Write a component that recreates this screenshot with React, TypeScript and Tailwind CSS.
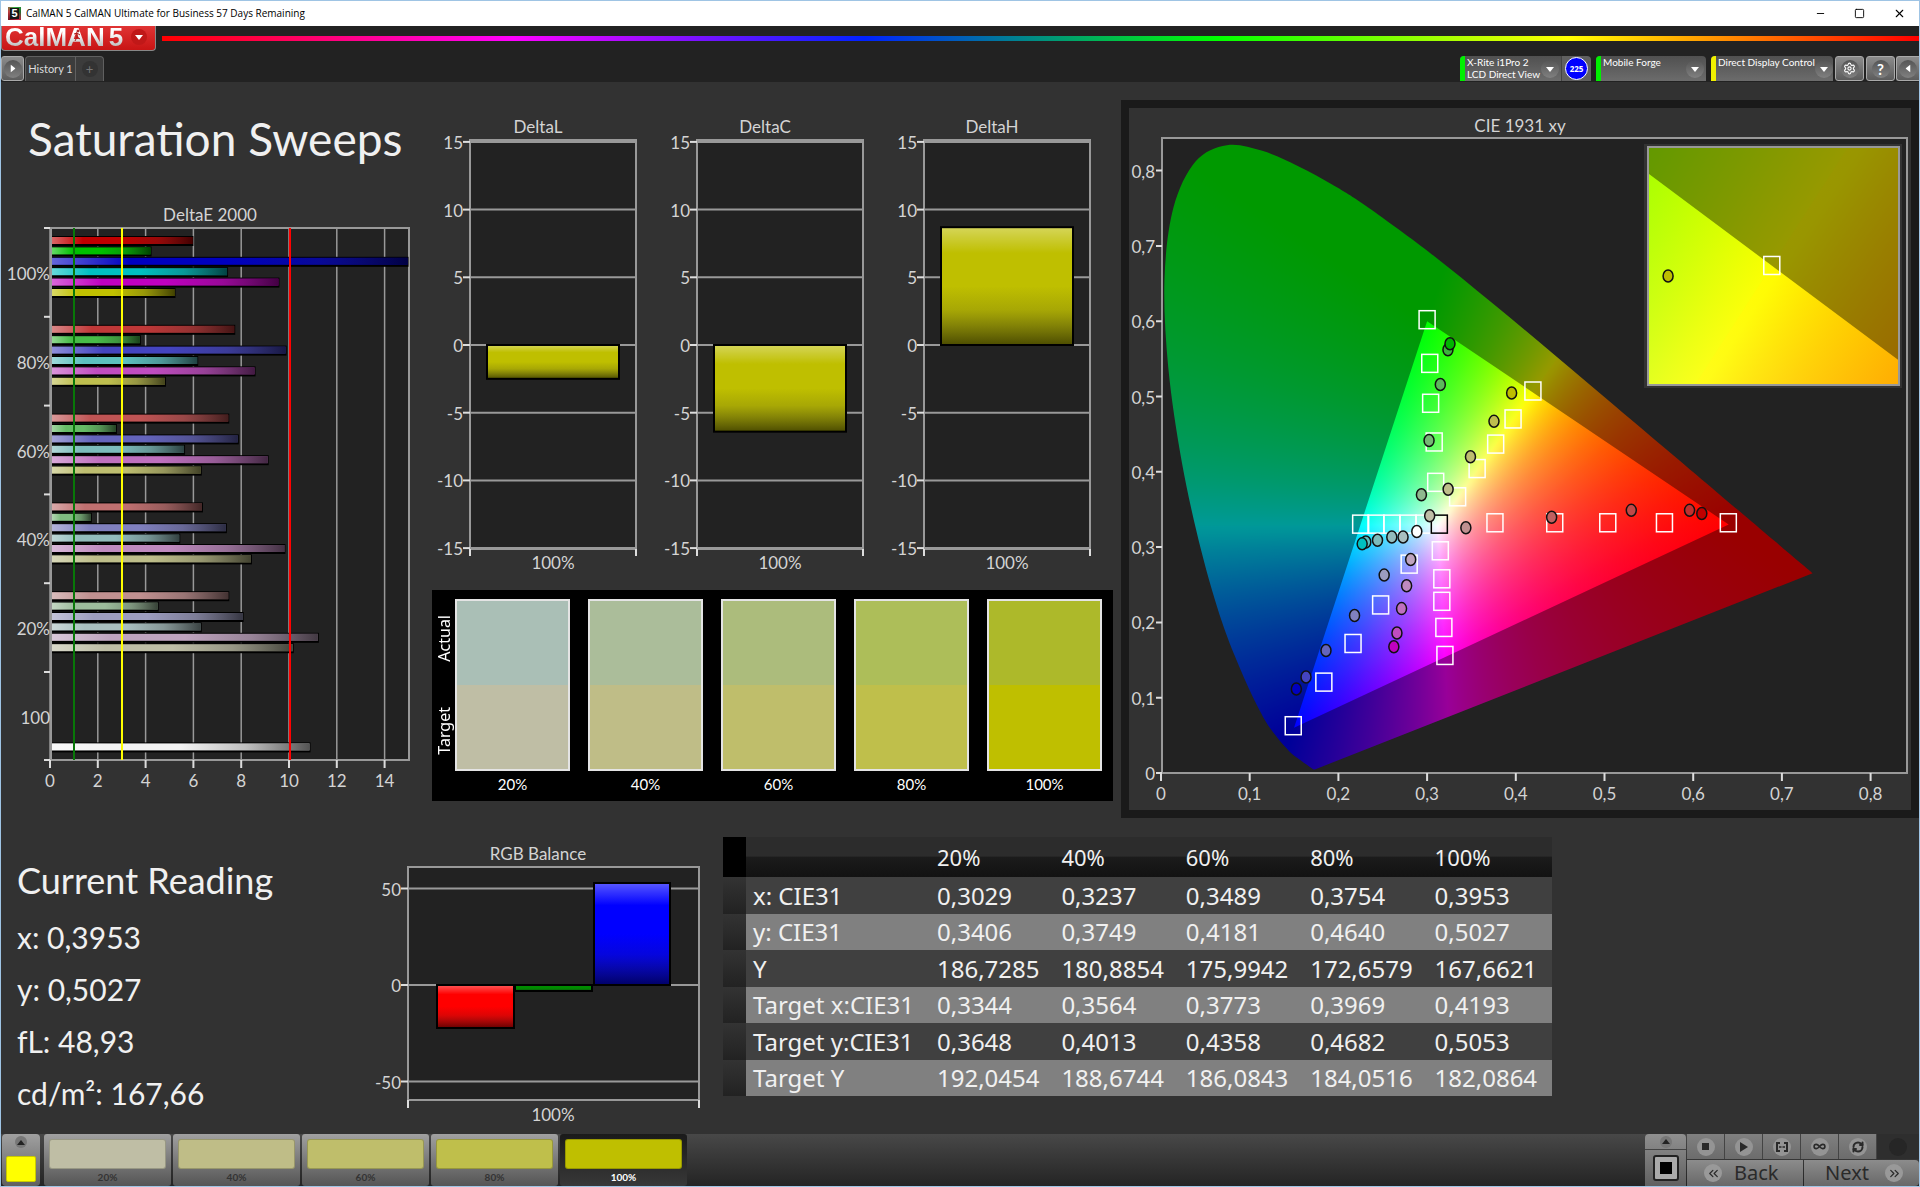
import type { CSSProperties, ReactNode } from "react";
import { Minus, Square, X, Settings, Infinity as InfinityIcon, RefreshCw, ChevronsLeft, ChevronsRight } from "lucide-react";
import clsx from "clsx";

type Point = [number, number];

interface Scale {
  ox: number;
  oy: number;
  kx: number;
  ky: number;
}

// ── Chart data ──

const LEVELS = ["20%", "40%", "60%", "80%", "100%"];

const DELTA_E = [
  {
    label: "100%",
    bars: [["#c00000", 6], ["#00c000", 4.25], ["#0000c0", 15], ["#00c0c0", 7.45], ["#c000c0", 9.6], ["#c0c000", 5.25]],
  },
  {
    label: "80%",
    bars: [["#c03838", 7.75], ["#48bc48", 3.8], ["#4444c0", 9.9], ["#5cc0c0", 6.2], ["#c04cc0", 8.6], ["#bebe4e", 4.85]],
  },
  {
    label: "60%",
    bars: [["#c05454", 7.5], ["#66bc66", 2.8], ["#6464bc", 7.9], ["#7cbcbc", 5.65], ["#bf70bf", 9.15], ["#bebe70", 6.35]],
  },
  {
    label: "40%",
    bars: [["#c07070", 6.4], ["#80bc80", 1.75], ["#8080bf", 7.4], ["#92bcbc", 5.45], ["#bf8abf", 9.85], ["#bebe8a", 8.45]],
  },
  {
    label: "20%",
    bars: [["#c09090", 7.5], ["#9cbc9c", 4.55], ["#9c9cbf", 8.1], ["#a8bfbf", 6.35], ["#bfa4bf", 11.25], ["#bebea6", 10.2]],
  },
  { label: "100", bars: [["#f4f4f4", 10.9]] },
] as { label: string; bars: [string, number][] }[];

const SWATCHES = [
  { actual: "#aabfb6", target: "#bfbea5" },
  { actual: "#abbd9a", target: "#bfbd87" },
  { actual: "#acbc7c", target: "#bfbe6b" },
  { actual: "#adbe59", target: "#bfbf4b" },
  { actual: "#adb92a", target: "#bfbf00" },
];

const READINGS = [
  ["x: CIE31", "0,3029", "0,3237", "0,3489", "0,3754", "0,3953"],
  ["y: CIE31", "0,3406", "0,3749", "0,4181", "0,4640", "0,5027"],
  ["Y", "186,7285", "180,8854", "175,9942", "172,6579", "167,6621"],
  ["Target x:CIE31", "0,3344", "0,3564", "0,3773", "0,3969", "0,4193"],
  ["Target y:CIE31", "0,3648", "0,4013", "0,4358", "0,4682", "0,5053"],
  ["Target Y", "192,0454", "188,6744", "186,0843", "184,0516", "182,0864"],
];

const LOCUS: Point[] = [
  [0.1741, 0.005], [0.1714, 0.0051], [0.1644, 0.0109], [0.1566, 0.0177], [0.144, 0.0297], [0.1241, 0.0578],
  [0.1096, 0.0868], [0.0913, 0.1327], [0.0687, 0.2007], [0.0454, 0.295], [0.0235, 0.4127], [0.0082, 0.5384],
  [0.0039, 0.6548], [0.0139, 0.7502], [0.0389, 0.812], [0.0743, 0.8338], [0.1142, 0.8262], [0.1547, 0.8059],
  [0.1929, 0.7816], [0.2296, 0.7543], [0.3016, 0.6923], [0.3731, 0.6245], [0.4441, 0.5547], [0.5125, 0.4866],
  [0.5752, 0.4242], [0.627, 0.3725], [0.6658, 0.334], [0.6915, 0.3083], [0.719, 0.2809], [0.7347, 0.2653],
];

const TARGETS: Point[] = [
  [0.3, 0.602], [0.303, 0.544], [0.304, 0.491], [0.308, 0.4396], [0.3097, 0.386],
  [0.3344, 0.3668], [0.3564, 0.4043], [0.3773, 0.4368], [0.3969, 0.4702], [0.4193, 0.5073],
  [0.3765, 0.3323], [0.4439, 0.3323], [0.5037, 0.3323], [0.5676, 0.3323], [0.6396, 0.3323],
  [0.2251, 0.3305], [0.2424, 0.3305], [0.2602, 0.3305], [0.2786, 0.3305], [0.2965, 0.3305],
  [0.3149, 0.2951], [0.3166, 0.2579], [0.3166, 0.228], [0.3189, 0.1933], [0.3201, 0.1561],
  [0.2798, 0.2774], [0.2476, 0.2232], [0.2165, 0.172], [0.1836, 0.1207], [0.1491, 0.0628],
];

const MEASURED: [number, number, string][] = [
  [0.2936, 0.3695, "#8fb88f"], [0.3022, 0.4415, "#74b874"], [0.3149, 0.5159, "#5cb85c"], [0.3235, 0.5622, "#3cb43c"], [0.3258, 0.5701, "#00b400"],
  [0.3437, 0.3256, "#c09090"], [0.4404, 0.3396, "#c06060"], [0.5302, 0.3488, "#c04848"], [0.5959, 0.3488, "#c03030"], [0.6097, 0.3445, "#c00000"],
  [0.3029, 0.3416, "#bebea6"], [0.3237, 0.3769, "#bebe8a"], [0.3489, 0.4201, "#bebe70"], [0.3754, 0.467, "#bebe4e"], [0.3953, 0.5047, "#bebe00"],
  [0.2884, 0.3207, "#ffffff"],
  [0.2729, 0.3134, "#a8bfbf"], [0.2602, 0.3134, "#92bcbc"], [0.2441, 0.3091, "#7cbcbc"], [0.2309, 0.3067, "#5cc0c0"], [0.2268, 0.3043, "#00c0c0"],
  [0.2516, 0.2628, "#9c9cbf"], [0.2182, 0.2091, "#8080bf"], [0.186, 0.1628, "#6464bc"], [0.1635, 0.1274, "#4444c0"], [0.1526, 0.1116, "#0000c0"],
  [0.2815, 0.2835, "#bfa4bf"], [0.2769, 0.2488, "#bf8abf"], [0.2712, 0.2183, "#bf70bf"], [0.266, 0.186, "#c04cc0"], [0.2625, 0.1677, "#c000c0"],
];

// ── Colour field ──

const RED: Point = [0.64, 0.33];
const GREEN: Point = [0.3, 0.6];
const BLUE: Point = [0.15, 0.06];
const WHITE: Point = [0.3127, 0.329];
const VERTICES = [RED, GREEN, BLUE];

function toPx([x, y]: Point, s: Scale): Point {
  return [s.ox + x * s.kx, s.oy - y * s.ky];
}

function linearRgb([x, y]: Point) {
  const z = 1 - x - y;
  return [
    3.2406 * x - 1.5372 * y - 0.4986 * z,
    -0.9689 * x + 1.8758 * y + 0.0415 * z,
    0.0557 * x - 0.204 * y + 1.057 * z,
  ];
}

// The ratio of two channels is constant along any ray from the third primary,
// so one conic gradient per minor channel gives the whole field.
function conic(dominant: number, minor: number, s: Scale) {
  const vertex = VERTICES[3 - dominant - minor];
  const [cx, cy] = toPx(vertex, s);
  const stops: string[] = [];
  for (let deg = 0; deg <= 360; deg += 1) {
    const a = (deg * Math.PI) / 180;
    const rgb = linearRgb([vertex[0] + (Math.sin(a) * 20) / s.kx, vertex[1] + (Math.cos(a) * 20) / s.ky]);
    const ratio = rgb[dominant] > 0 ? rgb[minor] / rgb[dominant] : 1;
    const v = Math.round(255 * Math.min(1, Math.max(0, ratio)));
    const c = [255, 255, 255];
    c[minor] = v;
    stops.push(`rgb(${c.join(",")}) ${deg}deg`);
  }
  return `conic-gradient(from 0deg at ${cx}px ${cy}px, ${stops.join(",")})`;
}

function fieldStyle(dominant: number, s: Scale): CSSProperties {
  const minors = [0, 1, 2].filter((c) => c !== dominant);
  return {
    backgroundImage: minors.map((m) => conic(dominant, m, s)).join(","),
    backgroundBlendMode: "multiply",
  };
}

function path(points: Point[]) {
  return `M${points.map((p) => p.map((n) => n.toFixed(2)).join(",")).join("L")}Z`;
}

function smoothPath(pts: Point[]) {
  let d = `M${pts[0].join(",")}`;
  for (let i = 0; i < pts.length - 1; i++) {
    const p0 = pts[Math.max(0, i - 1)];
    const p1 = pts[i];
    const p2 = pts[i + 1];
    const p3 = pts[Math.min(pts.length - 1, i + 2)];
    d += `C${p1[0] + (p2[0] - p0[0]) / 6},${p1[1] + (p2[1] - p0[1]) / 6} ${p2[0] - (p3[0] - p1[0]) / 6},${p2[1] - (p3[1] - p1[1]) / 6} ${p2.join(",")}`;
  }
  return `${d}Z`;
}

interface ColorFieldProps {
  id: string;
  scale: Scale;
  width: number;
  height: number;
}

function ColorField({ id, scale, width, height }: ColorFieldProps) {
  // rays leave white opposite each primary
  const ray = (v: Point): Point => [(WHITE[0] - v[0]) * 8, (WHITE[1] - v[1]) * 8];
  const at = (...rays: Point[]): Point =>
    toPx([WHITE[0] + rays.reduce((t, r) => t + r[0], 0), WHITE[1] + rays.reduce((t, r) => t + r[1], 0)], scale);
  const cyan = ray(RED);
  const magenta = ray(GREEN);
  const yellow = ray(BLUE);
  const triangle = path(VERTICES.map((v) => toPx(v, scale)));

  return (
    <>
      {/* the green wedge runs on under the blue one so that no seam shows */}
      <clipPath id={`${id}-green`}>
        <path d={path([at(), at(yellow), at(yellow, cyan), at(cyan), at(cyan, magenta)])} />
      </clipPath>
      <clipPath id={`${id}-blue`}>
        <path d={path([at(), at(cyan), at(cyan, magenta), at(magenta)])} />
      </clipPath>
      {[undefined, `url(#${id}-green)`, `url(#${id}-blue)`].map((clip, i) => (
        <g key={i} clipPath={clip}>
          <foreignObject width={width} height={height}>
            <div className="h-full w-full" style={fieldStyle(i, scale)} />
          </foreignObject>
        </g>
      ))}
      <path d={`M0,0H${width}V${height}H0Z${triangle}`} fillRule="evenodd" fill="#000" opacity={0.4} />
    </>
  );
}

function Target({ at, dark = false }: { at: Point; dark?: boolean }) {
  return <rect x={at[0] - 8} y={at[1] - 9} width={16} height={18} fill="none" stroke={dark ? "#000" : "#fff"} strokeWidth={1.5} />;
}

function Dot({ at, color }: { at: Point; color: string }) {
  return <ellipse cx={at[0]} cy={at[1]} rx={5} ry={6} fill={color} stroke="#111" strokeWidth={1.5} />;
}

const CIE: Scale = { ox: 32, oy: 665, kx: 887, ky: 753 };
const INSET: Scale = { ox: -1688, oy: 2170, kx: 4321, ky: 4060 };

function CieChart() {
  return (
    <svg viewBox="0 0 782 702" className="block w-full bg-[#323232] font-['Lato',sans-serif] text-[17px]" role="img" aria-label="CIE 1931 xy">
      <text x={391} y={24} textAnchor="middle" fill="#d4d4d4">CIE 1931 xy</text>
      <rect x={33} y={30} width={745} height={635} fill="#222" stroke="#999" strokeWidth={2} />
      <mask id="locus" maskUnits="userSpaceOnUse" x={0} y={0} width={782} height={702}>
        <path d={smoothPath(LOCUS.map((p) => toPx(p, CIE)))} fill="#fff" />
      </mask>
      <g mask="url(#locus)">
        <ColorField id="cie" scale={CIE} width={782} height={702} />
      </g>
      {[0, 1, 2, 3, 4, 5, 6, 7, 8].map((n) => {
        const [x] = toPx([n / 10, 0], CIE);
        const [, y] = toPx([0, n / 10], CIE);
        const label = n ? `0,${n}` : "0";
        return (
          <g key={n} fill="#d4d4d4">
            <path d={`M${x},665v8M33,${y}h-6`} stroke="#ddd" strokeWidth={2} />
            <text x={x} y={692} textAnchor="middle">{label}</text>
            <text x={26} y={y + 7} textAnchor="end">{label}</text>
          </g>
        );
      })}
      {TARGETS.map((t, i) => (
        <Target key={i} at={toPx(t, CIE)} />
      ))}
      <Target at={toPx([0.3138, 0.3305], CIE)} dark />
      {MEASURED.map(([x, y, color], i) => (
        <Dot key={i} at={toPx([x, y], CIE)} color={color} />
      ))}
      <rect x={515} y={36} width={258} height={244} fill="#333" />
      <svg x={519} y={39} width={251} height={238}>
        <ColorField id="inset" scale={INSET} width={251} height={238} />
        <Target at={toPx([0.4193, 0.5053], INSET)} />
        <Dot at={toPx([0.3953, 0.5027], INSET)} color="#bebe00" />
      </svg>
      <rect x={519} y={39} width={251} height={238} fill="none" stroke="#999" strokeWidth={2} />
    </svg>
  );
}

// ── Bar charts ──

function DeltaEChart() {
  const px = (v: number) => 50 + v * 23.9;
  return (
    <svg viewBox="1 199 430 600" className="block w-full font-['Lato',sans-serif] text-[17px]" role="img" aria-label="DeltaE 2000">
      <defs>
        <linearGradient id="sheen-x">
          <stop offset="0" stopColor="#fff" stopOpacity={0.4} />
          <stop offset="0.22" stopColor="#fff" stopOpacity={0} />
          <stop offset="0.5" stopColor="#222" stopOpacity={0} />
          <stop offset="0.75" stopColor="#222" stopOpacity={0.25} />
          <stop offset="1" stopColor="#000" stopOpacity={0.65} />
        </linearGradient>
      </defs>
      <text x={210} y={221} textAnchor="middle" fill="#d4d4d4">DeltaE 2000</text>
      <rect x={51} y={228} width={358} height={532} fill="#222" stroke="#999" strokeWidth={2} />
      {[0, 2, 4, 6, 8, 10, 12, 14].map((v) => (
        <g key={v}>
          <path d={`M${px(v)},228V760`} stroke="#999" strokeWidth={1.5} />
          <path d={`M${px(v)},760v8`} stroke="#ddd" strokeWidth={2} />
          <text x={px(v)} y={787} textAnchor="middle" fill="#d4d4d4">{v}</text>
        </g>
      ))}
      {DELTA_E.map(({ label, bars }, i) => {
        const top = 228 + i * 88.8;
        return (
          <g key={label}>
            <path d={`M50,${top}h-6`} stroke="#ddd" strokeWidth={2} />
            <text x={50} y={top + 52} textAnchor="end" fill="#d4d4d4">{label}</text>
            {bars.map(([color, value], j) => {
              const y = top + 8 + (bars.length === 1 ? 6 : j) * 10.4;
              return (
                <g key={color}>
                  <rect x={52} y={y} width={px(value) - 52} height={10} fill="#000" />
                  <rect x={52} y={y + 1} width={px(value) - 53} height={7} fill={color} />
                  <rect x={52} y={y + 1} width={px(value) - 53} height={7} fill="url(#sheen-x)" />
                </g>
              );
            })}
          </g>
        );
      })}
      <path d="M50,760h-6" stroke="#ddd" strokeWidth={2} />
      <path d="M74,228V760" stroke="#087808" strokeWidth={2} />
      <path d="M122,228V760" stroke="#ffff00" strokeWidth={2} />
      <path d="M290,228V760" stroke="#ff0000" strokeWidth={2} />
    </svg>
  );
}

interface GlossBarProps {
  x: number;
  y: number;
  width: number;
  height: number;
  color: string;
}

function GlossBar({ color, ...box }: GlossBarProps) {
  return (
    <>
      <rect {...box} fill={color} />
      <rect {...box} fill="url(#sheen-y)" stroke="#000" strokeWidth={2} />
    </>
  );
}

function SheenY() {
  return (
    <linearGradient id="sheen-y" x2="0" y2="1">
      <stop offset="0" stopColor="#fff" stopOpacity={0.35} />
      <stop offset="0.22" stopColor="#fff" stopOpacity={0} />
      <stop offset="0.5" stopColor="#222" stopOpacity={0} />
      <stop offset="0.7" stopColor="#222" stopOpacity={0.15} />
      <stop offset="1" stopColor="#000" stopOpacity={0.6} />
    </linearGradient>
  );
}

function DeltaChart({ title, value }: { title: string; value: number }) {
  const py = (v: number) => 245 - v * 13.54;
  return (
    <svg viewBox="2 0 227 480" className="block w-full min-w-0 flex-1 font-['Lato',sans-serif] text-[17px]" role="img" aria-label={title}>
      <defs>
        <SheenY />
      </defs>
      <text x={108} y={33} textAnchor="middle" fill="#d4d4d4">{title}</text>
      <rect x={40} y={40} width={166} height={409} fill="#222" stroke="#999" strokeWidth={2} />
      {[15, 10, 5, 0, -5, -10, -15].map((v) => (
        <g key={v}>
          <path d={`M40,${py(v)}h166`} stroke="#999" strokeWidth={2} />
          <path d={`M40,${py(v)}h-7`} stroke="#ddd" strokeWidth={2} />
          <text x={33} y={py(v) + 7} textAnchor="end" fill="#d4d4d4">{v}</text>
        </g>
      ))}
      <path d="M40,449v7M206,449v7" stroke="#ddd" strokeWidth={2} />
      <GlossBar x={57} y={Math.min(py(0), py(value))} width={132} height={Math.abs(value) * 13.54} color="#bfbf00" />
      <text x={123} y={469} textAnchor="middle" fill="#d4d4d4">100%</text>
    </svg>
  );
}

function RgbBalance() {
  return (
    <svg viewBox="361 840 350 290" className="block w-full font-['Lato',sans-serif] text-[17px]" role="img" aria-label="RGB Balance">
      <defs>
        <SheenY />
      </defs>
      <text x={538} y={860} textAnchor="middle" fill="#d4d4d4">RGB Balance</text>
      <rect x={408} y={867} width={291} height={233} fill="#222" stroke="#999" strokeWidth={2} />
      {[50, 0, -50].map((v) => {
        const y = 985 - v * 1.93;
        return (
          <g key={v}>
            <path d={`M408,${y}h291`} stroke="#999" strokeWidth={2} />
            <path d={`M408,${y}h-7`} stroke="#ddd" strokeWidth={2} />
            <text x={401} y={y + 7} textAnchor="end" fill="#d4d4d4">{v}</text>
          </g>
        );
      })}
      <path d="M408,1100v8M699,1100v8" stroke="#ddd" strokeWidth={2} />
      <GlossBar x={437} y={985} width={77} height={43} color="#ff0000" />
      <GlossBar x={515} y={985} width={77} height={6} color="#008c00" />
      <GlossBar x={594} y={883} width={76} height={102} color="#0000ff" />
      <text x={553} y={1121} textAnchor="middle" fill="#d4d4d4">100%</text>
    </svg>
  );
}

// ── Panels ──

function ColorComparison() {
  return (
    <div className="flex bg-black pt-[9px] pr-[11px] pb-1 text-white">
      <div className="flex h-[172px] w-[23px] flex-col items-center justify-between py-4 font-['Noto_Sans',sans-serif] text-[16px] leading-5">
        <span className="rotate-180 [writing-mode:vertical-rl]">Actual</span>
        <span className="rotate-180 [writing-mode:vertical-rl]">Target</span>
      </div>
      <div className="grid flex-1 grid-cols-5 gap-[18px]">
        {SWATCHES.map(({ actual, target }, i) => (
          <figure key={target}>
            <div className="flex h-[172px] flex-col border-2 border-[#e4e4e4]">
              <div className="flex-1" style={{ backgroundColor: actual }} />
              <div className="flex-1" style={{ backgroundColor: target }} />
            </div>
            <figcaption className="text-center text-[15px] leading-[26px]">{LEVELS[i]}</figcaption>
          </figure>
        ))}
      </div>
    </div>
  );
}

function ReadingsTable() {
  return (
    <table className="w-full table-fixed border-collapse text-left font-['Noto_Sans',sans-serif] text-[24px] leading-8 text-[#f0f0f0]">
      <thead>
        <tr className="h-10 bg-[linear-gradient(#2c2c2c_48%,#1b1b1b_50%,#121212)] text-[22px]">
          <th className="w-[23px] bg-black p-0" />
          <th className="w-[184px] p-0" />
          {LEVELS.map((level) => (
            <th key={level} scope="col" className="p-0 pl-[7px] font-normal">{level}</th>
          ))}
        </tr>
      </thead>
      <tbody>
        {READINGS.map(([label, ...values], i) => (
          <tr key={label} className={clsx(i % 2 ? "h-9 bg-[#808080]" : "h-[37px] bg-[#404040]")}>
            <td className="bg-[linear-gradient(#333,#222)] p-0" />
            <th scope="row" className="p-0 pl-[7px] font-normal whitespace-nowrap">{label}</th>
            {values.map((value) => (
              <td key={value} className="p-0 pl-[7px]">{value}</td>
            ))}
          </tr>
        ))}
      </tbody>
    </table>
  );
}

function Knob({ children }: { children?: ReactNode }) {
  return (
    <span className="flex size-[18px] shrink-0 items-center justify-center rounded-full bg-[linear-gradient(#555,#808080)]">
      {children}
    </span>
  );
}

function Triangle({ className }: { className?: string }) {
  return (
    <svg viewBox="0 0 8 5" className={clsx("h-[5px] w-2", className)} aria-hidden="true">
      <path d="M0,0h8L4,5Z" fill="currentColor" />
    </svg>
  );
}

function SourceTab({ lines, active, className }: { lines: string[]; active: string; className: string }) {
  return (
    <button className={clsx("flex h-[25px] items-start rounded-t bg-[linear-gradient(#505050,#6c6c6c)] text-left text-[10px] leading-3 text-white", className)}>
      <span className={clsx("h-full w-[5px] shrink-0 rounded-tl", active)} />
      <span className="flex-1 pl-0.5 whitespace-nowrap">
        {lines.map((line) => (
          <span key={line} className="block">{line}</span>
        ))}
      </span>
      <span className="mt-1 mr-0.5">
        <Knob>
          <Triangle />
        </Knob>
      </span>
    </button>
  );
}

const SQUARE_BUTTON = "flex h-[25px] items-center justify-center rounded-[3px] border border-[#aaa] bg-[linear-gradient(#8c8c8c,#5c5c5c)] text-white";

function TitleBar() {
  return (
    <div className="flex h-[25px] items-center bg-white pl-[7px] text-black">
      <span className="flex size-[13px] items-center justify-center bg-[conic-gradient(#30b040,#207030,#c02040,#701020,#c04040,#30b040)]">
        <span className="flex h-[11px] w-[9px] items-center justify-center bg-[#161616] font-['Liberation_Sans',sans-serif] text-[11px] leading-[11px] font-bold text-white">
          5
        </span>
      </span>
      <h2 className="flex-1 pl-[5px] font-['Open_Sans',sans-serif] text-[10px]">CalMAN 5 CalMAN Ultimate for Business 57 Days Remaining</h2>
      <div className="flex items-center gap-7 pr-[13px]">
        <button aria-label="Minimize"><Minus size={11} strokeWidth={2} /></button>
        <button aria-label="Maximize"><Square size={11} strokeWidth={2} /></button>
        <button aria-label="Close"><X size={13} strokeWidth={2} /></button>
      </div>
    </div>
  );
}

function Header() {
  return (
    <header className="bg-[#222]">
      <div className="flex h-[30px] items-start">
        <button className="flex h-[25px] w-[155px] items-center rounded-b border border-t-0 border-[#888] bg-[linear-gradient(#e03434,#c81414)] pb-0.5 pl-[3px]">
          <span className="relative flex gap-1 font-['Liberation_Sans',sans-serif] text-[26px] leading-6 font-bold">
            <span className="bg-[linear-gradient(#ffffff_35%,#b0b0b0)] bg-clip-text text-transparent">CalMAN</span>
            <span className="bg-[linear-gradient(#ffffff_35%,#b0b0b0)] bg-clip-text text-transparent">5</span>
            {/* running figure over the second A */}
            <svg viewBox="0 0 10 14" className="absolute top-1 left-[67px] h-3.5 w-2.5" fill="none" stroke="#a81c1c" strokeWidth="1" aria-hidden="true">
              <circle cx="6" cy="2" r="1" fill="#a81c1c" />
              <path d="M2,5L5,4L8,6M5,4L5,8L8,10M5,8L3,12" />
            </svg>
          </span>
          <span className="ml-2 flex size-4 items-center justify-center rounded-full bg-[#c01818] text-white">
            <Triangle />
          </span>
        </button>
        <div className="mt-2.5 ml-[6px] h-[5px] flex-1 bg-[linear-gradient(90deg,#f00,#f0f_20%,#02f_40%,#0f0_60%,#ff0_80%,#f00)]" />
      </div>
      <div className="flex h-[26px] items-start">
        <button aria-label="Show workflow" className={clsx(SQUARE_BUTTON, "w-[23px]")}>
          <Knob>
            <Triangle className="-rotate-90" />
          </Knob>
        </button>
        <nav className="ml-px flex h-[25px] rounded-t border border-b-0 border-[#606060] bg-[#3c3c3c] text-[11px] text-[#ddd]">
          <a href="#history" className="flex w-[50px] items-center justify-center border-r border-[#606060] whitespace-nowrap">History 1</a>
          <button aria-label="Add tab" className="flex w-[27px] items-center justify-center text-[#777]">
            <span className="flex size-4 items-center justify-center rounded-full bg-[#333] text-[13px] leading-4">+</span>
          </button>
        </nav>
        <div className="ml-auto flex">
          <SourceTab lines={["X-Rite i1Pro 2", "LCD Direct View"]} active="bg-[#00f000]" className="w-[101px] rounded-tr-none" />
          <span className="flex h-[25px] w-[30px] items-center justify-center rounded-tr border-l border-[#444] bg-[#606060]">
            <span className="flex size-[23px] items-center justify-center rounded-full border border-white bg-[#0000ff] font-['Open_Sans',sans-serif] text-[8px] font-bold text-white">225</span>
          </span>
          <SourceTab lines={["Mobile Forge"]} active="bg-[#00f000]" className="ml-[5px] w-[110px]" />
          <SourceTab lines={["Direct Display Control"]} active="bg-[#f0f000]" className="ml-[5px] w-[122px]" />
          <button aria-label="Settings" className={clsx(SQUARE_BUTTON, "ml-0.5 w-[29px]")}>
            <Knob><Settings size={13} /></Knob>
          </button>
          <button aria-label="Help" className={clsx(SQUARE_BUTTON, "ml-0.5 w-[29px] text-[15px] leading-4 font-bold")}>
            <Knob>?</Knob>
          </button>
          <button aria-label="Collapse" className={clsx(SQUARE_BUTTON, "ml-px w-[23px] rounded-r-none border-r-0")}>
            <Knob><Triangle className="rotate-90" /></Knob>
          </button>
        </div>
      </div>
    </header>
  );
}

function TransportIcon({ label, children }: { label: string; children: ReactNode }) {
  return (
    <button aria-label={label} className="flex w-[38px] items-center justify-center border-r border-[#444] bg-[linear-gradient(#808080,#6c6c6c)] text-[#2a2a2a]">
      <span className="flex size-[18px] items-center justify-center rounded-full bg-[#949494]">{children}</span>
    </button>
  );
}

function Footer() {
  return (
    <footer className="flex h-[52px] items-stretch bg-[linear-gradient(#484848,#242424)] pl-px">
      <button aria-label="Pattern" className="flex w-[38px] flex-col items-center gap-2 rounded-sm bg-[linear-gradient(#a0a0a0,#606060)] pt-0.5 text-[#222]">
        <span className="flex size-3 items-center justify-center rounded-full bg-[#777]">
          <Triangle className="rotate-180" />
        </span>
        <span className="h-[26px] w-[30px] rounded-xs border border-[#c8c800] bg-[#ffff00]" />
      </button>
      <div className="ml-1 flex gap-0.5">
        {SWATCHES.map(({ target }, i) => {
          const selected = i === 4;
          return (
            <button
              key={target}
              className={clsx(
                "flex w-[127px] flex-col rounded-[3px] px-[5px] pt-[5px] text-[10px] leading-[17px] font-bold",
                selected ? "bg-[linear-gradient(#1a1a1a,#383838)] text-white" : "bg-[linear-gradient(#a0a0a0,#555)] text-[#333]",
              )}
            >
              <span className="h-[30px] rounded-[3px] border border-black/20" style={{ backgroundColor: target }} />
              <span>{LEVELS[i]}</span>
            </button>
          );
        })}
      </div>
      <div className="ml-auto flex">
        <div className="flex w-[41px] flex-col rounded-t bg-[linear-gradient(#909090,#606060)] text-[#222]">
          <button aria-label="More" className="flex h-4 items-center justify-center border-b border-[#444]">
            <span className="flex size-3 items-center justify-center rounded-full bg-[#777]">
              <Triangle className="rotate-180" />
            </span>
          </button>
          <button aria-label="Read" className="flex flex-1 items-center justify-center">
            <span className="flex size-[26px] items-center justify-center rounded-[3px] border-2 border-[#222] bg-[#aaa]">
              <span className="size-3 bg-black" />
            </span>
          </button>
        </div>
        <div className="ml-px flex w-[232px] flex-col gap-px">
          <div className="flex h-[25px]">
            <TransportIcon label="Stop"><span className="size-[7px] bg-current" /></TransportIcon>
            <TransportIcon label="Play">
              <svg viewBox="0 0 8 10" className="h-2.5 w-2"><path d="M0,0L8,5L0,10Z" fill="currentColor" /></svg>
            </TransportIcon>
            <TransportIcon label="Step">
              <svg viewBox="0 0 12 10" className="h-2.5 w-3" fill="none" stroke="currentColor">
                <path d="M4,1H1V9H4M8,1H11V9H8" strokeWidth="2" />
                <path d="M3,5H9" strokeWidth="1.5" strokeDasharray="2 0.5 1 0.5 2" />
              </svg>
            </TransportIcon>
            <TransportIcon label="Loop"><InfinityIcon size={13} strokeWidth={3} /></TransportIcon>
            <TransportIcon label="Refresh"><RefreshCw size={12} strokeWidth={4} /></TransportIcon>
            <span className="flex flex-1 items-center justify-center bg-[#2e2e2e]">
              <span className="size-[18px] rounded-full bg-[#262626]" />
            </span>
          </div>
          <div className="grid flex-1 grid-cols-2 gap-px font-['Noto_Sans',sans-serif] text-[20px] leading-6 text-[#2a2a2a]">
            <button className="flex items-center gap-3 bg-[linear-gradient(#8c8c8c,#686868)] pl-[17px]">
              <span className="flex size-[18px] items-center justify-center rounded-full bg-[#999]"><ChevronsLeft size={15} /></span>
              Back
            </button>
            <button className="flex items-center justify-end gap-4 rounded-r bg-[linear-gradient(#8c8c8c,#686868)] pr-4">
              Next
              <span className="flex size-[18px] items-center justify-center rounded-full bg-[#999]"><ChevronsRight size={15} /></span>
            </button>
          </div>
        </div>
      </div>
    </footer>
  );
}

export default function App() {
  return (
    <div className="flex min-h-screen flex-col border border-[#9fc4e4] bg-[#323232] font-['Lato',sans-serif] text-[#f0f0f0]">
      <TitleBar />
      <Header />
      <main className="flex-1">
        <section className="grid grid-cols-[430fr_690fr_798fr] items-start">
          <div>
            <h1 className="flex h-[117px] items-center pb-1 pl-[27px] text-[46px] whitespace-nowrap">Saturation Sweeps</h1>
            <DeltaEChart />
          </div>
          <div className="flex flex-col gap-2.5 pt-[18px] pr-2 pl-px">
            <div className="flex">
              <DeltaChart title="DeltaL" value={-2.5} />
              <DeltaChart title="DeltaC" value={-6.4} />
              <DeltaChart title="DeltaH" value={8.7} />
            </div>
            <ColorComparison />
          </div>
          <div className="mt-[18px] border-8 border-[#1a1a1a]">
            <CieChart />
          </div>
        </section>
        <section className="grid grid-cols-[360fr_350fr_841fr_367fr] items-start">
          <div className="pt-9 pl-4 text-[30px] leading-[52px] whitespace-nowrap">
            <h2 className="mb-[5px] text-[36px]">Current Reading</h2>
            <p>x: 0,3953</p>
            <p>y: 0,5027</p>
            <p>fL: 48,93</p>
            <p>cd/m²: 167,66</p>
          </div>
          <div className="pt-[22px]">
            <RgbBalance />
          </div>
          <div className="pt-[19px] pl-3">
            <ReadingsTable />
          </div>
        </section>
      </main>
      <Footer />
    </div>
  );
}
